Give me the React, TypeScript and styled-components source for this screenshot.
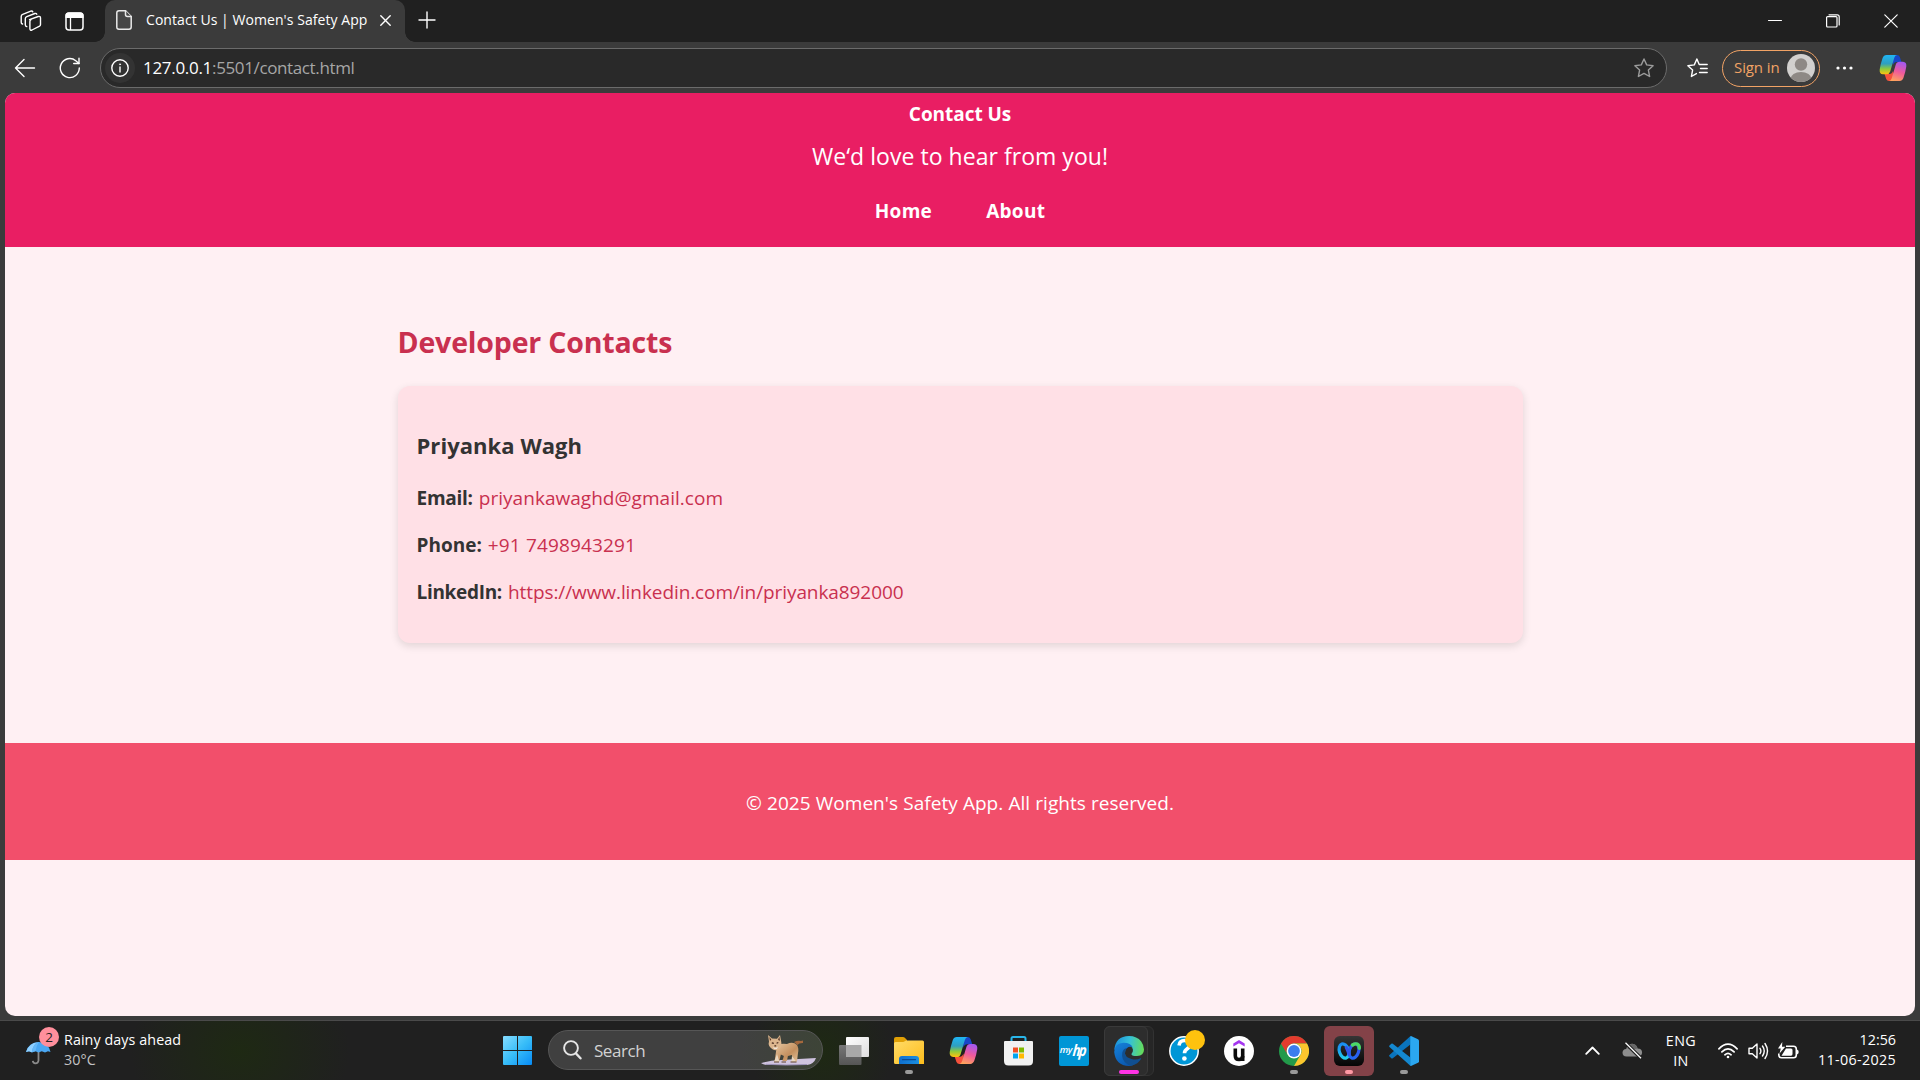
import React from 'react';
import styled, { createGlobalStyle } from 'styled-components';

const GlobalStyle = createGlobalStyle`
  * { box-sizing: border-box; }
  html, body { margin: 0; padding: 0; }
  body {
    font-family: "Open Sans", "Noto Sans", sans-serif;
    background: #3b3b3b;
    overflow: hidden;
  }
  h1, h2, h3, p { margin: 0; }
  a { text-decoration: none; }
  svg { display: block; flex: none; }
`;

const Desktop = styled.div`
  width: 1920px;
  height: 1080px;
  display: flex;
  flex-direction: column;
  overflow: hidden;
  background: #3b3b3b;
`;

/* ---------- browser chrome ---------- */

const TabStrip = styled.div`
  height: 42px;
  display: flex;
  align-items: center;
  background: #202020;
  color: #fff;
`;

const StripTools = styled.div`
  width: 105px;
  padding-left: 20px;
  display: flex;
  align-items: center;
  gap: 23px;
`;

const Tab = styled.div`
  position: relative;
  width: 300px;
  height: 42px;
  display: flex;
  align-items: center;
  padding: 0 14px 2px 11px;
  border-radius: 10px 10px 0 0;
  background: #3b3b3b;

  &::before,
  &::after {
    content: "";
    position: absolute;
    bottom: 0;
    width: 10px;
    height: 10px;
  }
  &::before {
    left: -10px;
    background: radial-gradient(circle at 0 0, transparent 9.5px, #3b3b3b 10px);
  }
  &::after {
    right: -10px;
    background: radial-gradient(circle at 100% 0, transparent 9.5px, #3b3b3b 10px);
  }
`;

const TabTitle = styled.span`
  flex: 1;
  margin-left: 14px;
  font-size: 14px;
  line-height: 20px;
  letter-spacing: 0.06px;
  white-space: nowrap;
`;

const NewTab = styled.div`
  margin-left: 13px;
  padding-bottom: 3px;
`;

const WindowControls = styled.div`
  margin-left: auto;
  padding-right: 22px;
  display: flex;
  align-items: center;
  gap: 44px;
`;

const Toolbar = styled.div`
  height: 51px;
  display: flex;
  align-items: center;
  padding: 1px 12px 0 14px;
  background: #3b3b3b;
  color: #fff;
`;

const NavButtons = styled.div`
  width: 86px;
  display: flex;
  align-items: center;
  gap: 23px;
`;

const AddressBar = styled.div`
  width: 1567px;
  height: 40px;
  display: flex;
  align-items: center;
  padding: 0 12px 0 4px;
  border: 1px solid #6b6b6b;
  border-radius: 20px;
  background: #292929;
`;

const SiteInfo = styled.div`
  width: 30px;
  height: 30px;
  display: grid;
  place-items: center;
  border-radius: 50%;
  background: #333;
`;

const Url = styled.div`
  flex: 1;
  margin-left: 8px;
  font-size: 17px;
  line-height: 24px;
  letter-spacing: -0.37px;
  color: #a6a6a6;
`;

const Host = styled.span`
  color: #fff;
  letter-spacing: -0.3px;
`;

const SignIn = styled.div`
  width: 98px;
  height: 37px;
  margin-left: 14px;
  padding: 0 4px 0 11px;
  display: flex;
  align-items: center;
  justify-content: space-between;
  border: 1.5px solid #f2a365;
  border-radius: 19px;
  color: #f2a365;
  font-size: 15px;
  line-height: 20px;
`;

const SignInLabel = styled.span`
  padding-bottom: 2px;
  letter-spacing: -0.1px;
`;

const FavSlot = styled.div`
  margin-left: 20px;
`;

const MoreSlot = styled.div`
  margin-left: 16px;
`;

const CopilotSlot = styled.div`
  margin-left: 26px;
`;

/* ---------- web page ---------- */

const Page = styled.div`
  height: 923px;
  margin: 0 5px;
  display: flex;
  flex-direction: column;
  border-radius: 10px;
  overflow: hidden;
  background: #fff0f3;
  color: #333;
  font-size: 19px;
  line-height: 27px;
`;

const Header = styled.header`
  height: 154px;
  padding-top: 8px;
  display: flex;
  flex-direction: column;
  align-items: center;
  background: #e91e63;
  color: #fff;
`;

const Title = styled.h1`
  font-size: 19px;
  line-height: 27px;
  letter-spacing: -0.05px;
`;

const Tagline = styled.p`
  margin-top: 12px;
  font-size: 23px;
  line-height: 32px;
  letter-spacing: 0.04px;
`;

const Nav = styled.nav`
  margin-top: 26px;
  display: flex;
  gap: 54px;
`;

const NavLink = styled.a`
  color: #fff;
  font-weight: 700;
  letter-spacing: 0.3px;
`;

const Main = styled.main`
  width: 1125px;
  height: 496px;
  margin: 0 auto;
  padding-top: 75px;
`;

const SectionTitle = styled.h2`
  font-size: 28.5px;
  line-height: 40px;
  letter-spacing: -0.17px;
  color: #c9304f;
`;

const Card = styled.section`
  height: 257px;
  margin-top: 24px;
  padding: 44px 19px 0;
  border-radius: 12px;
  background: #ffe0e6;
  box-shadow: 0 3px 8px rgba(0, 0, 0, 0.12);
`;

const PersonName = styled.h3`
  margin-bottom: 24px;
  font-size: 22px;
  line-height: 31px;
  letter-spacing: 0.05px;
`;

const ContactRow = styled.p`
  display: flex;
  gap: 6px;
  & + & {
    margin-top: 20px;
  }
`;

const Label = styled.strong<{ $spacing: number }>`
  letter-spacing: ${(p) => p.$spacing}px;
`;

const ContactLink = styled.a<{ $spacing: number }>`
  color: #c9304f;
  letter-spacing: ${(p) => p.$spacing}px;
`;

const Footer = styled.footer`
  height: 117px;
  padding-top: 47px;
  text-align: center;
  letter-spacing: 0.03px;
  word-spacing: 0.2px;
  background: #f24f6b;
  color: #fff;
`;

/* ---------- taskbar ---------- */

const Taskbar = styled.div`
  height: 60px;
  margin-top: 4px;
  display: flex;
  border-top: 1px solid #4a4a4a;
  background:
    radial-gradient(ellipse 110px 90px at 240px 30px, rgba(30, 42, 18, 0.9), transparent),
    radial-gradient(ellipse 70px 80px at 822px 30px, rgba(30, 42, 18, 0.9), transparent),
    #202020;
  color: #fff;
  font-size: 14.3px;
  line-height: 20px;
`;

const Weather = styled.div`
  width: 490px;
  padding: 9px 0 0 26px;
  display: flex;
  gap: 4px;
`;

const WeatherIcon = styled.div`
  position: relative;
  width: 34px;
  padding-top: 10px;
`;

const Badge = styled.span`
  position: absolute;
  left: 13px;
  top: -3px;
  width: 20px;
  height: 20px;
  border-radius: 50%;
  background: #ff8f9c;
  color: #222;
  font-size: 13.5px;
  line-height: 20px;
  text-align: center;
`;

const WeatherText = styled.div<{ $muted?: boolean }>`
  letter-spacing: 0.08px;
  color: ${(p) => (p.$muted ? '#c4c4c4' : '#fff')};
`;

const Slot = styled.div`
  position: relative;
  width: 55px;
  height: 59px;
  display: grid;
  place-items: center;
`;

const Tile = styled.div<{ $tone?: 'active' | 'alert' }>`
  width: 50px;
  height: 50px;
  display: grid;
  place-items: center;
  border-radius: 6px;
  background: ${(p) => (p.$tone === 'alert' ? '#834248' : 'transparent')};
`;

const StackedTile = styled.div`
  width: 50px;
  height: 50px;
  display: flex;
  border-radius: 6px;
  border: 1px solid #323232;
  background: #262626;
`;

const FrontTile = styled.div`
  width: 44px;
  margin: -1px 0 -1px -1px;
  padding-left: 9px;
  display: flex;
  align-items: center;
  border: 1px solid #3a3a3a;
  border-radius: 6px;
  background: #2d2d2d;
`;

const Indicator = styled.span<{ $color: string; $width: number }>`
  position: absolute;
  bottom: 6px;
  left: ${(p) => 27.5 - p.$width / 2}px;
  width: ${(p) => p.$width}px;
  height: 4px;
  border-radius: 2px;
  background: ${(p) => p.$color};
`;

const SearchPill = styled.div`
  width: 275px;
  height: 40px;
  margin: 9px 3px 0 3px;
  padding: 0 6px 0 14px;
  display: flex;
  align-items: center;
  border: 1px solid #565656;
  border-radius: 20px;
  background: linear-gradient(90deg, #404040 0%, #404040 70%, #3d4437 100%);
`;

const SearchLabel = styled.span`
  flex: 1;
  margin-left: 12px;
  padding-top: 2px;
  font-size: 17px;
  line-height: 24px;
  letter-spacing: -0.45px;
  color: #d2d2d2;
`;

const Tray = styled.div`
  margin-left: auto;
  padding-right: 24px;
  display: flex;
  align-items: center;
`;

const CloudSlot = styled.div`
  margin-left: 22px;
`;

const Language = styled.div`
  width: 40px;
  margin-left: 18px;
  text-align: center;
  letter-spacing: 0.4px;
`;

const StatusIcons = styled.div`
  width: 81px;
  margin-left: 17px;
  display: flex;
  align-items: center;
  justify-content: space-between;
`;

const Clock = styled.div`
  width: 97px;
  padding-bottom: 1px;
  text-align: right;
`;

const ClockDate = styled.div`
  letter-spacing: 0.33px;
`;

/* ---------- drawings ---------- */

const Line = (p: React.SVGProps<SVGSVGElement>) => (
  <svg fill="none" stroke="currentColor" strokeWidth={1.4} strokeLinecap="round" strokeLinejoin="round" {...p} />
);

const WorkspacesIcon = () => (
  <Line width="22" height="22" viewBox="0 0 22 22">
    <path d="M9.500 9.600 18.200 6.500Q20.500 5.900 20.500 8v6.600q0 1-.9 1.500L12 20q-1.900.8-2.100-1.200V11.400q0-1.300 1.200-1.700" />
    <path d="M16.800 4.200Q16.300 3 14.800 3.500L6.800 6.600Q5.300 7.200 5.300 8.800v6q0 1.500 1.500 1.800" />
    <path d="M12.800 1.800Q12.200.7 10.800 1.200L2.700 4.400Q1.200 5 1.200 6.600v5.600q0 1.500 1.300 1.800" />
  </Line>
);

const TabActionsIcon = () => (
  <svg width="19" height="19" viewBox="0 0 19 19">
    <rect x="1" y="1" width="17" height="17" rx="3" fill="none" stroke="#fff" strokeWidth="1.500" />
    <path d="M.5 6V3.500Q.5.500 3.500.500h12q3 0 3 3V6z" fill="#fff" />
    <path d="M5.500 6v12" stroke="#fff" strokeWidth="1.300" />
  </svg>
);

const PageIcon = () => (
  <Line width="16" height="20" viewBox="0 0 16 20" stroke="#e8e8e8" fill="#454545" strokeWidth={1.5}>
    <path d="M3 .8h6.500L15.200 6.500V17q0 2.200-2.200 2.200H3Q.8 19.200.8 17V3Q.8.8 3 .8z" />
    <path d="M9.500.8V4.500q0 2 2 2h3.700" />
  </Line>
);

const CopilotIcon = ({ size }: { size: number }) => (
  <svg width={size} height={size} viewBox="0 0 28 28">
    <defs>
      <linearGradient id="cpA" x1="0" y1="0" x2="0" y2="1">
        <stop offset="0" stopColor="#1fb5f5" />
        <stop offset=".45" stopColor="#2f9fc0" />
        <stop offset=".72" stopColor="#8ecb3c" />
        <stop offset="1" stopColor="#ffc20e" />
      </linearGradient>
      <linearGradient id="cpB" x1=".6" y1="0" x2=".3" y2="1">
        <stop offset="0" stopColor="#a658ee" />
        <stop offset=".5" stopColor="#f05a9a" />
        <stop offset="1" stopColor="#ffa45c" />
      </linearGradient>
    </defs>
    <path d="M13 1h5q2 0 2.800 2l1.700 5h-5q-2.500 0-3.500 3z" fill="#1746c8" />
    <path d="M15 27h-5q-2 0-2.800-2L5.500 20h5q2.500 0 3.500-3z" fill="#f5513c" />
    <path d="M7.500 1H18q-2 .3-2.700 2.800L11.200 17.500Q10.300 20.300 7.500 20.300H4Q.2 20 .7 15.500 1.500 10 3.600 4 4.700 1 7.500 1z" fill="url(#cpA)" />
    <path d="M20.500 27H10q2-.3 2.700-2.800L16.800 10.500q.9-2.800 3.700-2.800H24q3.800.3 3.300 4.800-.8 5.500-2.900 11.500-1.100 3-3.900 3z" fill="url(#cpB)" />
  </svg>
);

const LynxIcon = () => (
  <svg width="55" height="32" viewBox="0 0 55 32">
    <defs>
      <linearGradient id="fur" x1="0" y1="0" x2="1" y2="1">
        <stop offset="0" stopColor="#e6c7a2" />
        <stop offset=".6" stopColor="#c4905f" />
        <stop offset="1" stopColor="#e2c39c" />
      </linearGradient>
    </defs>
    <path d="M0 29q10-3 20-3l35-2q-2 6-9 7H9Q2 31 0 29z" fill="#cfc3df" />
    <path d="M5 30.300q20 1.300 41 .2" stroke="#9a8fb5" fill="none" />
    <path d="M33 8q4-2 7-1l2-.4V9q-4-.2-5.500 2z" fill="#a4683d" />
    <path d="M16 11q5-2 10-1 6-3 10 1 2 3 1 8-.5 4-1 8.500l-5 .5.500-3-.6-4-4 1-1 5h-4.500l1.500-5-3-1.500L18 28h-4.500l1-7z" fill="url(#fur)" />
    <path d="M16 20 18.500 28H13z M31 22l-.6 6h5z" fill="#e8d6c0" />
    <path d="M7 1l4 3.500 5 .2L19 1l1 5.500q1.200 5-1.200 8-3.500 3-7.300.8Q6.500 12 8 7.500z" fill="#dcb68e" />
    <path d="M8.300 3l2 2.500L9 7zM18.300 2.500 17 6l2 .8z" fill="#5b3a2a" />
    <path d="M10.800 8.800l2 .5M17.300 8.500l-1.700.7M13.400 11.800h1.800" stroke="#42281d" strokeWidth="1.200" />
    <path d="M12 12.800q2.500 2.200 5-.2l-1 2.500h-3z" fill="#f1e7da" />
    <path d="M13 28h5M20.500 28H25M29.500 28h6" stroke="#5e402e" strokeWidth="1" />
  </svg>
);

const WindowsLogo = () => (
  <svg width="29" height="29" viewBox="0 0 29 29">
    <defs>
      <linearGradient id="win" gradientUnits="userSpaceOnUse" x1="0" y1="0" x2="29" y2="29">
        <stop offset="0" stopColor="#86dcff" />
        <stop offset=".5" stopColor="#38bdf8" />
        <stop offset="1" stopColor="#078bf5" />
      </linearGradient>
    </defs>
    <path fill="url(#win)" d="M0 1q0-1 1-1h13v14H0zM15 0h13q1 0 1 1v13H15zM0 15h14v14H1q-1 0-1-1zM15 15h14v13q0 1-1 1H15z" />
  </svg>
);

const TaskViewIcon = () => (
  <svg width="30" height="28" viewBox="0 0 30 28">
    <defs>
      <linearGradient id="tvA" x1="0" y1="0" x2="1" y2="1">
        <stop offset="0" stopColor="#fff" />
        <stop offset="1" stopColor="#dedede" />
      </linearGradient>
      <linearGradient id="tvB" x1="0" y1="0" x2="0" y2="1">
        <stop offset="0" stopColor="#777" />
        <stop offset="1" stopColor="#555" />
      </linearGradient>
    </defs>
    <rect x="0" y="8" width="22.500" height="20" rx="1" fill="url(#tvB)" />
    <rect x="7" y="0" width="23" height="20" rx="1" fill="url(#tvA)" />
    <path d="M7 8h15.500v12H7z" fill="#a9a9a9" />
  </svg>
);

const FolderIcon = () => (
  <svg width="30" height="27" viewBox="0 0 30 27">
    <defs>
      <linearGradient id="fold" x1="0" y1="0" x2="1" y2="1">
        <stop offset="0" stopColor="#ffdb68" />
        <stop offset="1" stopColor="#fdbd1c" />
      </linearGradient>
      <linearGradient id="foldB" x1="0" y1="0" x2="1" y2="0">
        <stop offset="0" stopColor="#0f6fd0" />
        <stop offset="1" stopColor="#1b8fe0" />
      </linearGradient>
    </defs>
    <path d="M0 2q0-2 2-2h7q1 0 1.800.8L13 3v6H0z" fill="#e09f05" />
    <path d="M0 6.500Q0 5 1.500 5H9q1 0 1.800-.7L12 3.400h16.500q1.500 0 1.500 1.500V27H1.500Q0 27 0 25.500z" fill="url(#fold)" />
    <path d="M5 27v-5q0-3 3-3h14q3 0 3 3v5z" fill="url(#foldB)" />
    <path d="M8.500 22.700h13" stroke="#0a4a94" strokeWidth="1.200" strokeLinecap="round" />
  </svg>
);

const StoreIcon = () => (
  <svg width="29" height="30" viewBox="0 0 29 30">
    <path d="M7.500 6V2.500q0-1.500 1.500-1.500h11q1.500 0 1.500 1.500V6" fill="none" stroke="#29b6ea" strokeWidth="2" />
    <path d="M1 5h27q1 0 1 1v19q0 4.500-4.500 4.500h-20Q0 29.500 0 25V6q0-1 1-1z" fill="#f1f1f1" />
    <path d="M9 11.500h5v5H9z" fill="#f04e23" />
    <path d="M15 11.500h5v5h-5z" fill="#7fba00" />
    <path d="M9 17.500h5v5H9z" fill="#00a4ef" />
    <path d="M15 17.500h5v5h-5z" fill="#ffb900" />
  </svg>
);

const HpTile = styled.div`
  width: 30px;
  height: 30px;
  padding-bottom: 1px;
  display: flex;
  align-items: center;
  justify-content: center;
  border-radius: 2px;
  background: #0096d6;
  color: #fff;
  font-size: 9.5px;
  font-style: italic;
  font-weight: 600;
  line-height: 30px;
  letter-spacing: -0.6px;
`;

const HpMark = styled.span`
  font-size: 14.5px;
  font-weight: 700;
  letter-spacing: -2px;
  padding-right: 2px;
  transform: scale(0.9, 1.1) skewX(-6deg);
`;

const EdgeIcon = () => (
  <svg width="30" height="30" viewBox="0 0 30 30">
    <defs>
      <linearGradient id="edA" x1="0" y1=".4" x2="1" y2=".5">
        <stop offset="0" stopColor="#1b8fdc" />
        <stop offset=".5" stopColor="#35c1d8" />
        <stop offset="1" stopColor="#66dd58" />
      </linearGradient>
      <linearGradient id="edB" x1="0" y1="0" x2=".6" y2="1">
        <stop offset="0" stopColor="#1583dc" />
        <stop offset="1" stopColor="#0b57ae" />
      </linearGradient>
    </defs>
    <path d="M.3 14Q1.500 0 15 0q8 0 12.200 5.500Q30 9.300 30 13.500q0 6-7 6.500-5 0-5.500-1.500-.2-.7.700-1.700 1-1.400.7-3.300Q18 9 11.500 9 4 9 .3 14z" fill="url(#edA)" />
    <path d="M.2 16Q.5 7 9.500 6.700q7.500 0 9.300 5Q17 10 14.500 11 10.500 13 11 18q1 7.500 9.500 8 2 0 1 1Q19 30 15 30 1.500 29.500.2 16z" fill="url(#edB)" />
    <path d="M11 17.500q-.2-3.500 2-5.500-3.500.3-4.700 4.500Q7 23.500 13 28q3 2 5 1.500 6-1.500 9-6.500.5-1.200-.6-.7-4 2-8.800.7-6-1.500-6.600-5.500z" fill="#104f91" />
  </svg>
);

const HelpIcon = () => (
  <svg width="42" height="42" viewBox="-6 0 42 42">
    <circle cx="15" cy="21" r="14.200" fill="#0096d6" stroke="#fff" strokeWidth="1.500" />
    <path d="M10 15.500q.5-5 5.500-5t5.200 4.300q0 2.400-2.700 4.200-2.500 1.700-2.500 4.200" fill="none" stroke="#fff" strokeWidth="3.600" />
    <circle cx="15.400" cy="28.500" r="2.300" fill="#fff" />
    <circle cx="26" cy="10" r="10" fill="#ffc20e" />
  </svg>
);

const UdemyIcon = () => (
  <svg width="30" height="30" viewBox="0 0 30 30">
    <circle cx="15" cy="15" r="15" fill="#fff" />
    <path d="M9.300 7.500 15 4l5.700 3.500v3L15 7.200l-5.700 3.300z" fill="#a435f0" />
    <path d="M11.300 12.500v7.300q0 3.700 3.700 3.700t3.700-3.700v-7.300" fill="none" stroke="#0b0b0b" strokeWidth="3.600" />
    <path d="M16.900 20h3.600v5h-3.600z" fill="#0b0b0b" />
  </svg>
);

const ChromeIcon = () => (
  <svg width="30" height="30" viewBox="0 0 30 30">
    <circle cx="15" cy="15" r="15" fill="#229a4a" />
    <path d="M2 7.500A15 15 0 0 1 28 7.500H15A7.500 7.500 0 0 0 8.500 18.750z" fill="#e33b2e" />
    <path d="M28 7.500A15 15 0 0 1 15 30L21.500 18.750A7.500 7.500 0 0 0 15 7.500z" fill="#fcc62d" />
    <circle cx="15" cy="15" r="7.400" fill="#fff" />
    <circle cx="15" cy="15" r="5.900" fill="#3b7ded" />
  </svg>
);

const WebexIcon = () => (
  <svg width="30" height="30" viewBox="0 0 30 30">
    <defs>
      <linearGradient id="wxBg" x1="0" y1="0" x2="0" y2="1">
        <stop offset="0" stopColor="#353535" />
        <stop offset="1" stopColor="#050505" />
      </linearGradient>
      <linearGradient id="wxA" x1="0" y1="0" x2="0" y2="1">
        <stop offset="0" stopColor="#1a8df2" />
        <stop offset="1" stopColor="#20cdea" />
      </linearGradient>
      <linearGradient id="wxB" x1="0" y1="0" x2="0" y2="1">
        <stop offset="0" stopColor="#3350e8" />
        <stop offset="1" stopColor="#2468f2" />
      </linearGradient>
    </defs>
    <rect width="30" height="30" rx="6" fill="url(#wxBg)" />
    <ellipse cx="10" cy="15" rx="4.600" ry="7.300" transform="rotate(-18 10 15)" fill="none" stroke="url(#wxA)" strokeWidth="3.200" />
    <ellipse cx="20" cy="15" rx="4.600" ry="7.300" transform="rotate(18 20 15)" fill="none" stroke="url(#wxB)" strokeWidth="3.200" />
    <path d="M12.300 11.500q1.800 3.500 2.700 7" fill="none" stroke="#2f55e8" strokeWidth="3.200" strokeLinecap="round" />
    <path d="M18.500 9q2.500-1.800 5-.8 2 1 1.800 4" fill="none" stroke="#4cd964" strokeWidth="3.400" strokeLinecap="round" />
  </svg>
);

const VsCodeIcon = () => (
  <svg width="30" height="30" viewBox="0 0 30 30">
    <path d="M22 0l7 3.200q1 .5 1 1.600v20.400q0 1.100-1 1.600L22 30z" fill="#2ba7f0" />
    <path d="M22 0v8L3.800 22.200q-.8.600-1.500 0l-1.800-1.600q-.8-.8 0-1.500L21 .6z" fill="#0a74bd" />
    <path d="M22 30v-8L3.800 7.800q-.8-.6-1.500 0L.5 9.400q-.8.800 0 1.500L21 29.400z" fill="#1488d0" />
    <path d="M21 .5q1-.7 1 .5v28q0 1.200-1 .5z" fill="#1f97e0" />
  </svg>
);

const UmbrellaIcon = () => (
  <svg width="26" height="25" viewBox="0 0 26 25">
    <path d="M12.500 10v10.500q-.3 2.800-3 2.800-2.500-.2-2.700-2.500" fill="none" stroke="#8a8a8a" strokeWidth="1.800" />
    <path d="M0 12Q2.500 2.300 13 2q9.500.6 11.500 10l-2.500-.8-3 1.300-3.200-1.300-3.300 1.300-3.200-1.300-3.300 1.300L3 11.200z" fill="#4aa7f2" />
    <path d="M0 12Q2.500 3.500 11.500 2.200 6.500 5.500 5.800 12.300L3 11.200z" fill="#8fd0ff" />
    <path d="M11.500 2.200 13 2q-3 4-3.500 9.200L5.800 12.300Q6.500 5.500 11.500 2.200z" fill="#64b7f7" />
  </svg>
);

const WifiIcon = () => (
  <Line width="20" height="16" viewBox="0 0 20 16" strokeWidth={1.700}>
    <path d="M.9 5.800q9.100-9.200 18.200 0M3.900 8.900q6.100-6 12.200 0M6.900 11.800q3.100-2.700 6.200 0" />
    <circle cx="10" cy="14" r="1.300" fill="currentColor" stroke="none" />
  </Line>
);

const SpeakerIcon = () => (
  <Line width="21" height="18" viewBox="0 0 21 18">
    <path d="M1 6.300h3.300L9 2v14l-4.700-4.300H1z" />
    <path d="M12 6.300q1.800 2.700 0 5.400M14.500 4q3.500 5 0 10M17 1.500q5 7.500 0 15" />
  </Line>
);

const BatteryIcon = () => (
  <svg width="21" height="18" viewBox="0 0 21 18">
    <path d="M8 4.200h7.500q2.800 0 2.800 2.800v6q0 2.800-2.800 2.800h-12Q.8 15.800.8 13v-1.500" fill="none" stroke="#fff" strokeWidth="1.600" />
    <path d="M18.500 7.800h.8q1.400.2 1.400 2.200t-1.400 2.200h-.8z" fill="#fff" />
    <path d="M8 6.500h5q1.500 0 1.500 1.500v4q0 1.800-1.500 1.800H3.500z" fill="#fff" />
    <path d="M4.300 0 0 6.500h2.800L1.500 11.500 7.300 4.700H4z" fill="#fff" />
  </svg>
);

const tasks: {
  name: string;
  icon: React.ReactNode;
  tone?: 'active' | 'alert';
  mark?: { color: string; width: number };
}[] = [
  { name: 'taskview', icon: <TaskViewIcon /> },
  { name: 'explorer', icon: <FolderIcon />, mark: { color: '#9a9a9a', width: 8 } },
  { name: 'copilot', icon: <CopilotIcon size={29} /> },
  { name: 'store', icon: <StoreIcon /> },
  {
    name: 'myhp',
    icon: (
      <HpTile>
        my<HpMark>hp</HpMark>
      </HpTile>
    ),
  },
  { name: 'edge', icon: <EdgeIcon />, tone: 'active', mark: { color: '#ff33e6', width: 20 } },
  { name: 'help', icon: <HelpIcon /> },
  { name: 'udemy', icon: <UdemyIcon /> },
  { name: 'chrome', icon: <ChromeIcon />, mark: { color: '#9a9a9a', width: 8 } },
  { name: 'webex', icon: <WebexIcon />, tone: 'alert', mark: { color: '#ff99a4', width: 8 } },
  { name: 'code', icon: <VsCodeIcon />, mark: { color: '#9a9a9a', width: 8 } },
];

const contacts = [
  { label: 'Email:', value: 'priyankawaghd@gmail.com', ls: -0.25, vs: 0.03, href: 'mailto:priyankawaghd@gmail.com' },
  { label: 'Phone:', value: '+91 7498943291', ls: 0, vs: 0.14, href: 'tel:+917498943291' },
  {
    label: 'LinkedIn:',
    value: 'https://www.linkedin.com/in/priyanka892000',
    ls: -0.31,
    vs: -0.085,
    href: '#linkedin',
  },
];

export default function App() {
  return (
    <Desktop>
      <GlobalStyle />
      <TabStrip>
        <StripTools>
          <WorkspacesIcon />
          <TabActionsIcon />
        </StripTools>
        <Tab>
          <PageIcon />
          <TabTitle>Contact Us | Women's Safety App</TabTitle>
          <Line width="11" height="11" viewBox="0 0 11 11">
            <path d="M.8.8l9.400 9.400M10.200.8.8 10.200" />
          </Line>
        </Tab>
        <NewTab>
          <Line width="18" height="18" viewBox="0 0 18 18">
            <path d="M9 1v16M1 9h16" />
          </Line>
        </NewTab>
        <WindowControls>
          <Line width="14" height="14" viewBox="0 0 14 14" strokeWidth={1}>
            <path d="M.5 6.500h13" />
          </Line>
          <Line width="14" height="14" viewBox="0 0 14 14" strokeWidth={1.200}>
            <rect x=".6" y="2.600" width="10.400" height="10.400" rx="1" />
            <path d="M3 .8h8.200q2 0 2 2V11" />
          </Line>
          <Line width="14" height="14" viewBox="0 0 14 14" strokeWidth={1.200}>
            <path d="M.8.8l12.400 12.400M13.200.8.8 13.200" />
          </Line>
        </WindowControls>
      </TabStrip>

      <Toolbar>
        <NavButtons>
          <Line width="22" height="20" viewBox="0 0 22 20">
            <path d="M20.500 10H1.500M10 1.500 1.500 10l8.500 8.500" />
          </Line>
          <Line width="22" height="22" viewBox="0 0 22 22">
            <path d="M20.300 11a9.500 9.500 0 1 1-3.500-7.300L20 6.500" />
            <path d="M20 1.200v5.300h-5.300" />
          </Line>
        </NavButtons>
        <AddressBar>
          <SiteInfo>
            <Line width="18" height="18" viewBox="0 0 18 18">
              <circle cx="9" cy="9" r="8.200" />
              <path d="M9 8v5" />
              <circle cx="9" cy="5.300" r=".6" fill="currentColor" strokeWidth=".6" />
            </Line>
          </SiteInfo>
          <Url>
            <Host>127.0.0.1</Host>:5501/contact.html
          </Url>
          <Line width="20" height="20" viewBox="0 0 20 20" stroke="#9b9b9b">
            <path d="M10 1l2.700 5.900 6.400.8-4.700 4.400 1.200 6.400L10 15.400l-5.600 3.100 1.200-6.400L.9 7.700l6.400-.8z" />
          </Line>
        </AddressBar>
        <FavSlot>
          <Line width="21" height="20" viewBox="0 0 21 20">
            <path d="M14 6.500H12.200L9.900 1 7.300 6.900.9 7.700l4.700 4.400-1.200 6.400 5-2.900M12.500 6.500h7.700M13.500 10.500h6.700M12.500 14.500h7.700" />
          </Line>
        </FavSlot>
        <SignIn>
          <SignInLabel>Sign in</SignInLabel>
          <svg width="28" height="28" viewBox="0 0 28 28">
            <defs>
              <clipPath id="avatar">
                <circle cx="14" cy="14" r="14" />
              </clipPath>
            </defs>
            <g clipPath="url(#avatar)">
              <path d="M0 0h28v28H0z" fill="#d2d0ce" />
              <circle cx="14" cy="10.500" r="6.200" fill="#8e8985" />
              <ellipse cx="14" cy="25" rx="10.500" ry="7" fill="#8e8985" />
            </g>
          </svg>
        </SignIn>
        <MoreSlot>
          <svg width="17" height="4" viewBox="0 0 17 4" fill="#fff">
            <circle cx="2" cy="2" r="1.600" />
            <circle cx="8.500" cy="2" r="1.600" />
            <circle cx="15" cy="2" r="1.600" />
          </svg>
        </MoreSlot>
        <CopilotSlot>
          <CopilotIcon size={28} />
        </CopilotSlot>
      </Toolbar>

      <Page>
        <Header>
          <Title>Contact Us</Title>
          <Tagline>We‘d love to hear from you!</Tagline>
          <Nav>
            <NavLink href="#home">Home</NavLink>
            <NavLink href="#about">About</NavLink>
          </Nav>
        </Header>
        <Main>
          <SectionTitle>Developer Contacts</SectionTitle>
          <Card>
            <PersonName>Priyanka Wagh</PersonName>
            {contacts.map((c) => (
              <ContactRow key={c.label}>
                <Label $spacing={c.ls}>{c.label}</Label>
                <ContactLink $spacing={c.vs} href={c.href}>
                  {c.value}
                </ContactLink>
              </ContactRow>
            ))}
          </Card>
        </Main>
        <Footer>© 2025 Women's Safety App. All rights reserved.</Footer>
      </Page>

      <Taskbar>
        <Weather>
          <WeatherIcon>
            <UmbrellaIcon />
            <Badge>2</Badge>
          </WeatherIcon>
          <div>
            <WeatherText>Rainy days ahead</WeatherText>
            <WeatherText $muted>30°C</WeatherText>
          </div>
        </Weather>
        <Slot>
          <WindowsLogo />
        </Slot>
        <SearchPill>
          <svg width="19" height="20" viewBox="0 0 19 20" fill="none" stroke="#e6e6e6" strokeLinecap="round">
            <circle cx="8" cy="8" r="6.900" strokeWidth="1.900" />
            <path d="M13 13.500l4.500 4.800" strokeWidth="2.400" />
          </svg>
          <SearchLabel>Search</SearchLabel>
          <LynxIcon />
        </SearchPill>
        {tasks.map((t) => (
          <Slot key={t.name}>
            {t.tone === 'active' ? (
              <StackedTile>
                <FrontTile>{t.icon}</FrontTile>
              </StackedTile>
            ) : (
              <Tile $tone={t.tone}>{t.icon}</Tile>
            )}
            {t.mark && <Indicator $color={t.mark.color} $width={t.mark.width} />}
          </Slot>
        ))}
        <Tray>
          <Line width="15" height="9" viewBox="0 0 15 9" strokeWidth={1.800}>
            <path d="M1.200 7.800 7.500 1.500l6.300 6.300" />
          </Line>
          <CloudSlot>
            <svg width="21" height="17" viewBox="0 0 21 17">
              <path d="M4.500 14.500q-4-.2-4-4 .2-3.200 3.700-3.600Q5.500 2 10 1.800q4.500.2 5.600 4.800 4.400.2 4.500 4-.2 3.700-4.100 3.900z" fill="#8d8d8d" />
              <path d="M5.500 6.700Q7 2 10 1.800q4.500.2 5.600 4.800-3.600 0-4.600 2.400-2.500-2.500-5.500-2.300z" fill="#686868" />
              <path d="M3.500 1 19 16.300" stroke="#202020" strokeWidth="3.500" />
              <path d="M3.500.8 19 16.300" stroke="#fff" strokeWidth="1.300" />
            </svg>
          </CloudSlot>
          <Language>
            ENG
            <br />
            IN
          </Language>
          <StatusIcons>
            <WifiIcon />
            <SpeakerIcon />
            <BatteryIcon />
          </StatusIcons>
          <Clock>
            12:56
            <ClockDate>11-06-2025</ClockDate>
          </Clock>
        </Tray>
      </Taskbar>
    </Desktop>
  );
}
